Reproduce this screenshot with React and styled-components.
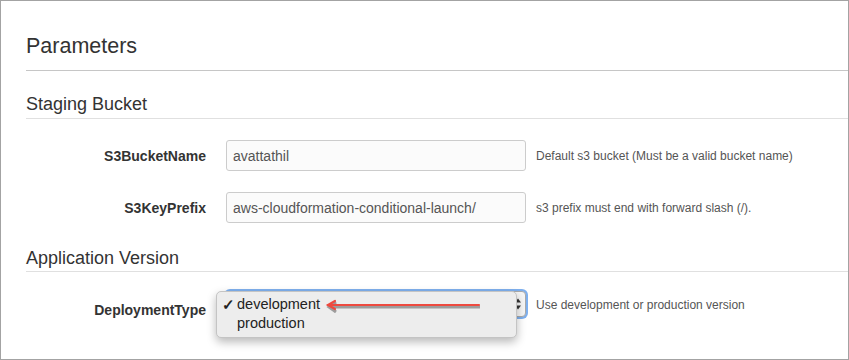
import React from 'react';
import styled, { createGlobalStyle } from 'styled-components';

const GlobalStyle = createGlobalStyle`
  html, body {
    margin: 0;
    padding: 0;
    background: #ffffff;
  }
  body {
    font-family: "Liberation Sans", Arial, sans-serif;
    color: #333333;
  }
`;

const PARAMS = [
  {
    name: 'S3BucketName',
    value: 'avattathil',
    help: 'Default s3 bucket (Must be a valid bucket name)',
  },
  {
    name: 'S3KeyPrefix',
    value: 'aws-cloudformation-conditional-launch/',
    help: 's3 prefix must end with forward slash (/).',
  },
];

function RedArrow() {
  return (
    <Arrow width="160" height="14" viewBox="0 0 160 14">
      <g stroke="#8a8a8a" strokeWidth="3" fill="none" opacity="0.8">
        <line x1="4" y1="8" x2="155" y2="8" />
        <polyline points="11,3 4,8 11,13" />
      </g>
      <g stroke="#ee4a3f" strokeWidth="2.2" fill="none" strokeLinecap="round">
        <line x1="3" y1="6" x2="154" y2="6" />
        <polyline points="10,2 3,6 10,10" />
      </g>
    </Arrow>
  );
}

function App() {
  return (
    <>
      <GlobalStyle />
      <Frame>
        <Title>Parameters</Title>

        <Section>Staging Bucket</Section>
        {PARAMS.map((p) => (
          <Row key={p.name}>
            <Label>{p.name}</Label>
            <Input readOnly value={p.value} />
            <Help>{p.help}</Help>
          </Row>
        ))}

        <Section $gap={24} $pad={2}>Application Version</Section>
        <SelectRow>
          <Label $top>DeploymentType</Label>
          <SelectWrap>
            <Select>
              <Spinner viewBox="0 0 8 14" width="8" height="14">
                <path d="M1 5.5 L4 1.5 L7 5.5 Z" fill="#333" />
                <path d="M1 8.5 L4 12.5 L7 8.5 Z" fill="#333" />
              </Spinner>
            </Select>
            <Menu>
              <Option $checked>development</Option>
              <Option>production</Option>
            </Menu>
            <RedArrow />
          </SelectWrap>
          <Help>Use development or production version</Help>
        </SelectRow>
      </Frame>
    </>
  );
}

export default App;

const Frame = styled.div`
  box-sizing: border-box;
  width: 849px;
  height: 360px;
  border: 1px solid #a3a3a3;
  padding-left: 25px;
  overflow: hidden;
`;

const Title = styled.h2`
  margin: 0;
  padding: 33px 0 12px;
  font-size: 21.5px;
  line-height: 24px;
  font-weight: 400;
  color: #333333;
  border-bottom: 1px solid #c6c6c6;
`;

const Section = styled.h3`
  margin: ${(p) => p.$gap || 22}px 0 0;
  padding-bottom: ${(p) => p.$pad || 3}px;
  font-size: 18px;
  line-height: 22px;
  font-weight: 400;
  color: #333333;
  border-bottom: 1px solid #e0e0e0;
`;

const Row = styled.div`
  display: flex;
  align-items: center;
  margin-top: 21px;
`;

const SelectRow = styled(Row)`
  margin-top: 19px;
  align-items: flex-start;
`;

const Label = styled.div`
  width: 180px;
  flex: none;
  text-align: right;
  font-size: 14px;
  line-height: 16px;
  font-weight: 700;
  color: #333333;
  padding-top: ${(p) => (p.$top ? 11 : 0)}px;
`;

const Input = styled.input`
  box-sizing: border-box;
  margin-left: 20px;
  width: 300px;
  height: 31px;
  padding: 0 6px;
  border: 1px solid #cccccc;
  border-radius: 3px;
  background: #fbfbfb;
  font-family: "Liberation Sans", Arial, sans-serif;
  font-size: 14px;
  color: #555555;
  outline: none;
`;

const Help = styled.div`
  margin-left: 10px;
  font-size: 12px;
  line-height: 14px;
  color: #555555;
  align-self: center;
`;

const SelectWrap = styled.div`
  position: relative;
  margin-left: 20px;
  width: 300px;
  height: 26px;
  align-self: flex-start;
`;

const Select = styled.div`
  box-sizing: border-box;
  height: 26px;
  border: 1px solid #aaaaaa;
  border-radius: 4px;
  background: #f6f6f6;
  box-shadow: 0 0 0 2px #7fb0ee;
  display: flex;
  align-items: center;
  justify-content: flex-end;
  padding-right: 3px;
`;

const Spinner = styled.svg`
  display: block;
`;

const Menu = styled.div`
  position: absolute;
  left: -10px;
  top: 0;
  box-sizing: border-box;
  width: 301px;
  height: 47px;
  padding-top: 3px;
  background: #ededed;
  border: 1px solid #c4c4c4;
  border-radius: 5px;
  box-shadow: 0 4px 10px rgba(0, 0, 0, 0.28);
`;

const Option = styled.div`
  position: relative;
  padding-left: 20px;
  font-size: 14.5px;
  line-height: 19px;
  color: #222222;

  &::before {
    content: ${(p) => (p.$checked ? '"✓"' : 'none')};
    position: absolute;
    left: 5px;
    font-size: 15px;
    font-weight: 700;
  }
`;

const Arrow = styled.svg`
  position: absolute;
  left: 99px;
  top: 8px;
`;
